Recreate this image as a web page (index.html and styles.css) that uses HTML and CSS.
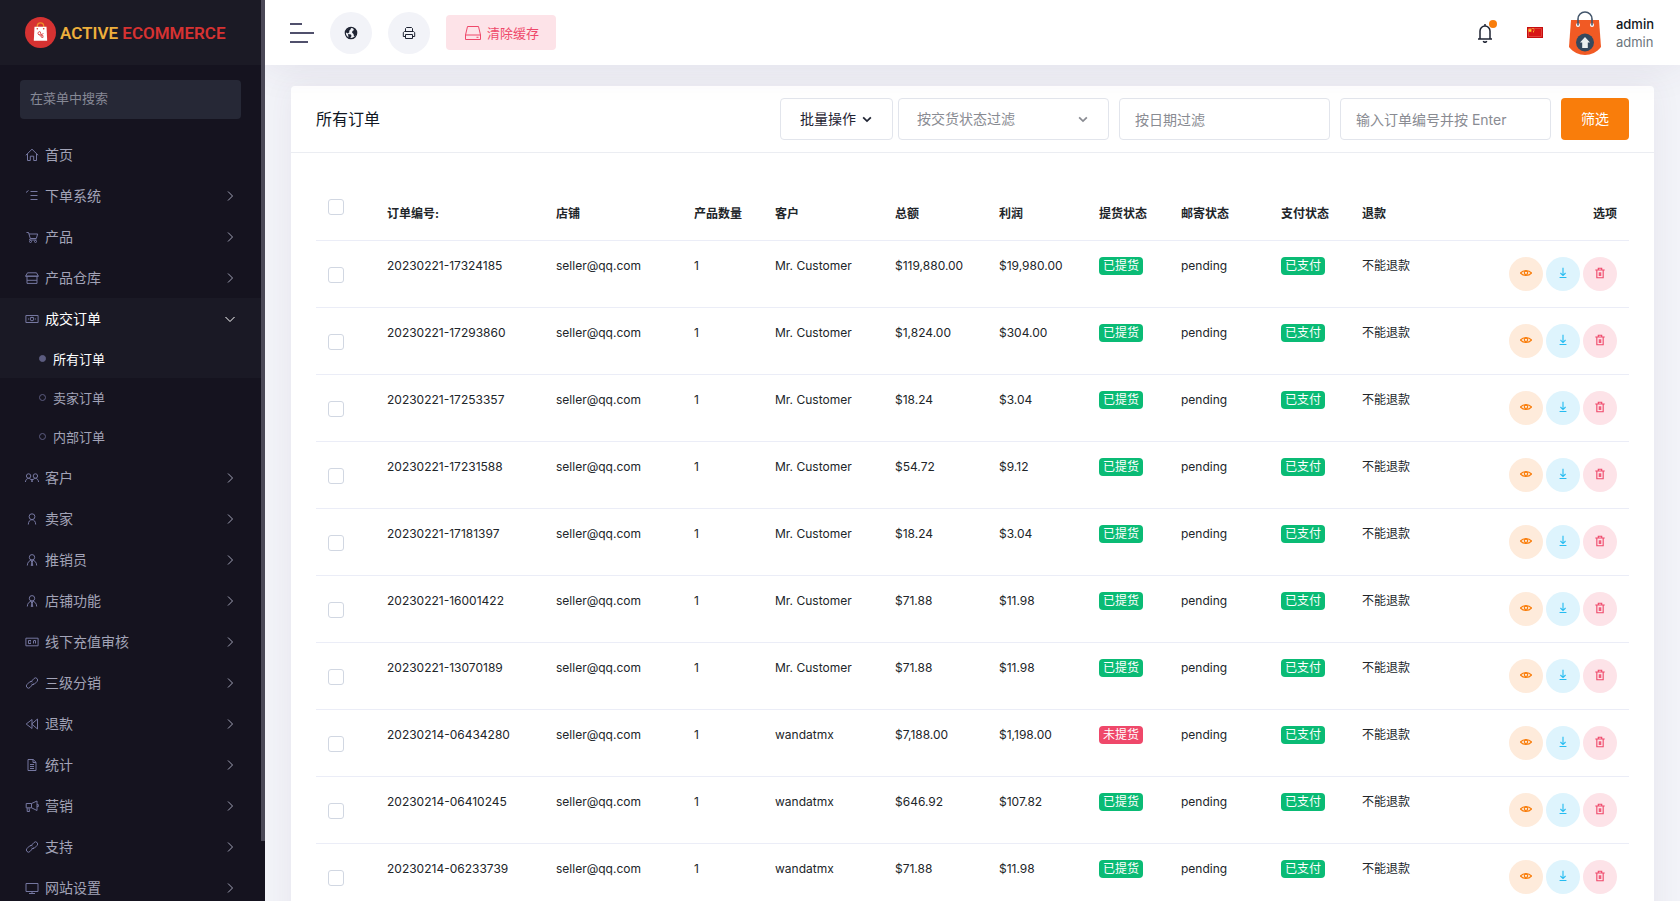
FILE: index.html
```html
<!DOCTYPE html>
<html lang="zh-CN">
<head>
<meta charset="utf-8">
<meta name="viewport" content="width=device-width, initial-scale=1">
<title>所有订单 | Active Ecommerce</title>
<link rel="stylesheet" href="styles.css">
</head>
<body>
<svg class="sprite" aria-hidden="true">
  <symbol id="i-home" viewBox="0 0 14 14"><path d="M.8 7.3 7 1.2l6.2 6.1M2.5 6v6.5h2.8V8.2h3.4v4.3h2.8V6"/></symbol>
  <symbol id="i-tasks" viewBox="0 0 14 14"><path d="m1 3.500 2.500-2M5.500 2.500h7M5.500 6.500h7M5.500 10.500h7"/></symbol>
  <symbol id="i-cart" viewBox="0 0 14 14"><path d="M1.5 2.5h2l1.8 6h6l1.4-4.5H4M5.3 8.5 4.5 10h7"/><circle cx="5.5" cy="11.5" r="1"/><circle cx="10.5" cy="11.5" r="1"/></symbol>
  <symbol id="i-store" viewBox="0 0 14 14"><path d="M2.5 1.8h9l1.9 3.4H.6zM2 5.2v7.2h10V5.2M2 9.3h10M.6 5.2h12.8"/></symbol>
  <symbol id="i-money" viewBox="0 0 14 14"><path d="M.9 3.5h12.2v7H.9z"/><circle cx="7" cy="7" r="1.8"/><path d="M3 7h1M10 7h1M5.5 5.5h3"/></symbol>
  <symbol id="i-users" viewBox="0 0 14 14"><circle cx="3.6" cy="5" r="2.2"/><circle cx="10.4" cy="5" r="2.2"/><path d="M.4 11c.3-2.4 1.6-3.6 3.2-3.6S6.700 8.600 7 11c.3-2.400 1.800-3.600 3.400-3.600s2.900 1.200 3.200 3.600M5.800 8.500h2.400"/></symbol>
  <symbol id="i-user" viewBox="0 0 14 14"><circle cx="7" cy="4.7" r="2.900"/><path d="M3.300 12.500c.1-3 1.600-4.800 3.700-4.800s3.600 1.800 3.700 4.800"/></symbol>
  <symbol id="i-tie" viewBox="0 0 14 14"><circle cx="7" cy="4.300" r="2.700"/><path d="M2.300 12.500c.1-3.400 2.200-5.300 4.700-5.300s4.600 1.900 4.700 5.300M5.500 7.500 7 9l1.500-1.500M7 9l-.8 3.500h1.600z"/></symbol>
  <symbol id="i-card" viewBox="0 0 14 14"><path d="M.9 3.200h12.200v7.600H.9zM6 5.500H3.500v3H6M5 7h1M9 5.500h1.500v3"/><path d="M8.500 5.500v3"/></symbol>
  <symbol id="i-link" viewBox="0 0 14 14"><path d="M5.500 6.300 9 2.500a2.100 2.100 0 0 1 3 3L9.500 8a2.100 2.100 0 0 1-3 0M8.500 7.500 5 11.500a2.100 2.100 0 0 1-3-3L4.500 6a2.100 2.100 0 0 1 3 0"/></symbol>
  <symbol id="i-back" viewBox="0 0 14 14"><path d="M7 2.500v9L1.200 7zM12.500 2v10L6.700 7z"/></symbol>
  <symbol id="i-file" viewBox="0 0 14 14"><path d="M3 1.500h5.200L11 4.200v8.300H3zM8 1.500v3h3M5 6.500h4M5 8.500h4M5 10.500h4"/></symbol>
  <symbol id="i-horn" viewBox="0 0 14 14"><path d="M1.200 4.500h5.300L12 2v9.500L6.500 8.800H1.200zM6.500 4.500v4.300M2.200 9v3.500H4.500L4 9M12 5.600h1.300v2H12"/></symbol>
  <symbol id="i-screen" viewBox="0 0 14 14"><path d="M1 2.500h12v8H1zM4 12.500h6M7 10.500v2"/></symbol>
  <symbol id="i-right" viewBox="0 0 14 14"><path d="m5 2.500 4.500 4.500L5 11.500"/></symbol>
  <symbol id="i-down" viewBox="0 0 14 14"><path d="M2.500 5 7 9.500 11.500 5"/></symbol>
  <symbol id="i-printer" viewBox="0 0 14 14"><path d="M3.500 5.500V2.500l1-1h5l1 1v3M3.500 10.500H1.300v-4l1.200-1h9l1.200 1v4h-2.200M3.500 8.500h7v4h-7zM4 5.500h6"/></symbol>
  <symbol id="i-disk" viewBox="0 0 18 16"><path d="M3.500 1.500h11l2 8.500v4.500h-15V10zM1.500 10h15M12.500 12.300h2"/></symbol>
  <symbol id="i-bell" viewBox="0 0 16 20"><path d="M8 1v1.700M3 15.500V8a5 5 0 0 1 10 0v7.500M1 16h14M6.300 18c.3.900.9 1.300 1.700 1.300s1.400-.4 1.700-1.300"/></symbol>
  <symbol id="i-eye" viewBox="0 0 14 14"><path d="M.5 7C3.900 3.300 10.100 3.300 13.500 7 10.100 10.700 3.900 10.700.5 7z"/><circle cx="7" cy="6.800" r="2"/></symbol>
  <symbol id="i-save" viewBox="0 0 14 14"><path d="M7 1v8.500M4 7l3 3 3-3M3 12.300h8"/></symbol>
  <symbol id="i-trash" viewBox="0 0 14 14"><path d="M1.500 3.500h11M5 3.300V1.500h4v1.800M3.300 3.500v9h7.400v-9M6.200 6v4.500M7.800 6v4.500"/></symbol>
</svg>

<div class="app">
  <aside class="sidebar">
    <a class="brand" href="#">
      <svg class="brand-mark" viewBox="0 0 31 31" aria-hidden="true">
        <circle cx="15.500" cy="15.500" r="15.500" fill="#d63232"/>
        <path d="M12.300 11V9a3.200 3.200 0 0 1 6.400 0v2" fill="none" stroke="#f0912a" stroke-width="1.300"/>
        <path d="M9.500 9.800h12l.7 14h-13.400z" fill="#fff"/>
        <circle cx="12.300" cy="11.800" r=".8" fill="#d63232"/><circle cx="18.700" cy="11.800" r=".8" fill="#d63232"/>
        <path d="M13 15.500l2-1 1 2-2 1.500-1-1zM16 18l2 .5v2l-2-.5zM14.500 18.500l4-2" fill="none" stroke="#d63232" stroke-width=".8"/>
      </svg>
      <span class="brand-name"><span class="brand-first">ACTIVE</span> ECOMMERCE</span>
    </a>
    <input class="menu-search" type="search" placeholder="在菜单中搜索" aria-label="在菜单中搜索">
    <nav class="menu">
      <a class="item" href="#"><svg><use href="#i-home"/></svg><span>首页</span></a>
      <a class="item" href="#"><svg><use href="#i-tasks"/></svg><span>下单系统</span><svg class="arrow"><use href="#i-right"/></svg></a>
      <a class="item" href="#"><svg><use href="#i-cart"/></svg><span>产品</span><svg class="arrow"><use href="#i-right"/></svg></a>
      <a class="item" href="#"><svg><use href="#i-store"/></svg><span>产品仓库</span><svg class="arrow"><use href="#i-right"/></svg></a>
      <a class="item open" href="#"><svg><use href="#i-money"/></svg><span>成交订单</span><svg class="arrow"><use href="#i-down"/></svg></a>
      <div class="submenu">
        <a class="sub current" href="#">所有订单</a>
        <a class="sub" href="#">卖家订单</a>
        <a class="sub" href="#">内部订单</a>
      </div>
      <a class="item" href="#"><svg><use href="#i-users"/></svg><span>客户</span><svg class="arrow"><use href="#i-right"/></svg></a>
      <a class="item" href="#"><svg><use href="#i-user"/></svg><span>卖家</span><svg class="arrow"><use href="#i-right"/></svg></a>
      <a class="item" href="#"><svg><use href="#i-tie"/></svg><span>推销员</span><svg class="arrow"><use href="#i-right"/></svg></a>
      <a class="item" href="#"><svg><use href="#i-tie"/></svg><span>店铺功能</span><svg class="arrow"><use href="#i-right"/></svg></a>
      <a class="item" href="#"><svg><use href="#i-card"/></svg><span>线下充值审核</span><svg class="arrow"><use href="#i-right"/></svg></a>
      <a class="item" href="#"><svg><use href="#i-link"/></svg><span>三级分销</span><svg class="arrow"><use href="#i-right"/></svg></a>
      <a class="item" href="#"><svg><use href="#i-back"/></svg><span>退款</span><svg class="arrow"><use href="#i-right"/></svg></a>
      <a class="item" href="#"><svg><use href="#i-file"/></svg><span>统计</span><svg class="arrow"><use href="#i-right"/></svg></a>
      <a class="item" href="#"><svg><use href="#i-horn"/></svg><span>营销</span><svg class="arrow"><use href="#i-right"/></svg></a>
      <a class="item" href="#"><svg><use href="#i-link"/></svg><span>支持</span><svg class="arrow"><use href="#i-right"/></svg></a>
      <a class="item" href="#"><svg><use href="#i-screen"/></svg><span>网站设置</span><svg class="arrow"><use href="#i-right"/></svg></a>
    </nav>
    <div class="scroll-thumb"></div>
  </aside>

  <div class="page">
    <header class="topbar">
      <button class="burger" type="button" aria-label="切换菜单"><span></span><span></span><span></span></button>
      <a class="round" href="#" aria-label="浏览网站">
        <svg class="globe" viewBox="0 0 14 14"><circle cx="7" cy="7" r="5.700" fill="none" stroke="#1f2433" stroke-width="1.200"/><path d="M2 4.500 5 1.500l2 .5-.5 1.500L5 5l.5 1L4 7.500 2 6.500zM4 8l3 .5.500 1.500L6 12.500l-1.500-1zM8.500 1.800l3 1.500 1.300 3.200-1 3-1.800 1L9.500 8 8 6.500l.5-1.500L10 4z" fill="#1f2433"/></svg>
      </a>
      <a class="round" href="#" aria-label="打印"><svg><use href="#i-printer"/></svg></a>
      <button class="clear-cache" type="button"><svg><use href="#i-disk"/></svg>清除缓存</button>
      <div class="top-right">
        <button class="bell" type="button" aria-label="通知"><svg><use href="#i-bell"/></svg><span class="dot"></span></button>
        <button class="flag" type="button" aria-label="语言">
          <svg viewBox="0 0 16 11"><path d="M0 0h16v11H0z" fill="#c60d0d"/><path d="M1.500 1.500h13v8h-13z" fill="#d81414" stroke="#e0403a"/><path d="M3 1.200l.7 1.400 1.500.1-1.100 1.100.4 1.500L3 4.600l-1.500.7.4-1.500L.8 2.700l1.500-.1zM5.500 1h1v1h-1zM6.500 2.500h1v1h-1zM6 4.300h1v1H6z" fill="#ffd92e"/></svg>
        </button>
        <a class="account" href="#">
          <svg class="avatar" viewBox="0 0 32 44" aria-hidden="true">
            <path d="M2 9h28l2 27c-8 10.500-24 10.500-32 0z" fill="#f15a24"/>
            <circle cx="9" cy="14" r="2" fill="#fff"/><circle cx="23" cy="14" r="2" fill="#fff"/>
            <path d="M9 14.500V8a7 7 0 0 1 14 0v6.500" fill="none" stroke="#43566b" stroke-width="1.600"/>
            <circle cx="16" cy="31.500" r="9" fill="#34495e"/>
            <path d="m16 26 5 5.500h-2.200V37h-5.600v-5.500H11z" fill="#ecf0f1"/>
          </svg>
          <span class="who"><strong>admin</strong><small>admin</small></span>
        </a>
      </div>
    </header>

    <main class="content">
      <section class="card">
        <form class="card-head">
          <h1>所有订单</h1>
          <button class="bulk" type="button">批量操作<svg><use href="#i-down"/></svg></button>
          <div class="field pick">
            <select class="control" aria-label="按交货状态过滤"><option>按交货状态过滤</option></select>
            <svg><use href="#i-down"/></svg>
          </div>
          <div class="field"><input class="control" type="text" placeholder="按日期过滤" aria-label="按日期过滤"></div>
          <div class="field"><input class="control" type="text" placeholder="输入订单编号并按 Enter" aria-label="输入订单编号并按 Enter"></div>
          <button class="filter" type="button">筛选</button>
        </form>
        <div class="card-body">
          <table>
            <colgroup><col class="c-check"><col class="c-code"><col class="c-shop"><col class="c-count"><col class="c-client"><col class="c-total"><col class="c-profit"><col class="c-delivery"><col class="c-mail"><col class="c-pay"><col class="c-refund"><col></colgroup>
            <thead>
              <tr><th><input type="checkbox" aria-label="全选"></th><th>订单编号:</th><th>店铺</th><th>产品数量</th><th>客户</th><th>总额</th><th>利润</th><th>提货状态</th><th>邮寄状态</th><th>支付状态</th><th>退款</th><th class="option-head">选项</th></tr>
            </thead>
            <tbody id="orders"></tbody>
          </table>
        </div>
      </section>
    </main>
  </div>
</div>
<script src="app.js"></script>
</body>
</html>
```

FILE: styles.css
```css
* { box-sizing: border-box; }
body {
  margin: 0;
  font-family: Inter, "Noto Sans CJK SC", sans-serif;
  font-size: 12px;
  line-height: 18px;
  color: #212529;
  background: #f2f3f8;
}
a { color: inherit; text-decoration: none; }
button, input, select { font: inherit; color: inherit; }
button { border: 0; padding: 0; background: none; cursor: pointer; }
svg { fill: none; stroke: currentColor; stroke-width: 1; flex: none; width: 14px; height: 14px; }
.sprite { position: absolute; width: 0; height: 0; }

.app { display: flex; height: 100vh; overflow: hidden; }

/* Sidebar */
.sidebar { position: relative; flex: none; width: 265px; background: #15131f; color: #a2a3b7; overflow: hidden; z-index: 2; }
.brand { display: flex; align-items: center; gap: 4px; height: 65px; padding-left: 25px; background: #1b1a25; }
.brand-mark { width: 31px; height: 31px; stroke: none; }
.brand-name { font-family: Roboto, sans-serif; font-size: 17px; font-weight: 600; color: #d63232; white-space: nowrap; }
.brand-first { color: #eeaf3c; }
.menu-search {
  display: block; width: 221px; height: 39px; margin: 15px 20px; padding: 0 10px 4px;
  border: 0; border-radius: 4px; background: #262836; font-size: 13px; outline: 0;
}
.menu-search::placeholder { color: #868996; opacity: 1; }
.item { display: flex; align-items: center; gap: 6px; height: 41px; padding: 0 28px 0 25px; font-size: 14px; }
.item svg { color: #7577a0; }
.item .arrow { margin-left: auto; color: #a2a3b7; }
.open, .current { background: #1a1925; color: #fff; }
.item.open .arrow { color: #fff; }
.submenu { padding-bottom: 1px; }
.sub { display: flex; align-items: center; gap: 7px; height: 39px; padding-left: 39px; font-size: 13px; }
.sub::before { content: ""; box-sizing: border-box; width: 7px; height: 7px; border: 1px solid #5c5c80; border-radius: 50%; }
.current::before { background: #5c5c80; }
.scroll-thumb { position: absolute; top: 0; right: 0; width: 4px; height: 841px; background: #4b4957; }

/* Top bar */
.page { flex: 1; min-width: 0; display: flex; flex-direction: column; }
.topbar {
  position: relative; z-index: 1; flex: none; display: flex; align-items: center;
  height: 65px; padding: 0 26px 0 25px; background: #fff; box-shadow: 0 0 40px rgba(82, 63, 105, .1);
}
.burger { display: flex; flex-direction: column; gap: 7px; width: 24px; margin-right: 16px; }
.burger span { width: 24px; height: 2px; background: #50506c; }
.burger span:first-child { width: 12px; }
.burger span:last-child { width: 18px; }
.round { display: grid; place-items: center; width: 42px; height: 42px; margin-right: 16px; border-radius: 50%; background: #f2f3f8; color: #1f2433; }
.round .globe { stroke: none; }
.clear-cache { display: flex; align-items: center; gap: 5px; height: 35px; padding: 0 17px 0 18px; border-radius: 4px; background: #fde3e8; color: #ef486a; font-size: 13px; }
.clear-cache svg { width: 18px; height: 16px; }
.top-right { display: flex; align-items: center; margin-left: auto; }
.bell { position: relative; width: 16px; height: 20px; color: #1f2433; }
.bell svg { display: block; width: 16px; height: 20px; stroke-width: 1.5; }
.dot { position: absolute; top: -3px; right: -4px; width: 8px; height: 8px; border-radius: 50%; background: #f97d0b; }
.flag { margin: 0 26px 0 34px; }
.flag svg { display: block; width: 16px; height: 11px; stroke: none; }
.account { display: flex; align-items: center; gap: 15px; }
.avatar { width: 32px; height: 44px; stroke: none; }
.who strong, .who small { display: block; font-size: 13px; font-weight: 400; color: #6c757d; }
.who strong { font-weight: 500; color: #111723; }

/* Orders card */
.content { flex: 1; min-height: 0; padding: 21px 26px; overflow-y: auto; scrollbar-width: none; }
.card { border-radius: 4px; background: #fff; box-shadow: 0 0 30px rgba(82, 63, 105, .07); }
.card-head { display: flex; align-items: center; gap: 10px; min-height: 67px; padding: 0 25px; border-bottom: 1px solid #ebedf2; }
.card-head h1 { flex: 1; margin: 0; font-size: 16px; font-weight: 400; color: #111723; }
.bulk { display: flex; align-items: center; justify-content: center; gap: 5px; width: 113px; height: 42px; margin-right: -5px; border: 1px solid #e2e5ec; border-radius: 4px; font-size: 14px; color: #1f2433; }
.bulk svg { width: 12px; height: 12px; stroke-width: 2; }
.field { position: relative; flex: 0 1 211px; }
.control { display: block; width: 100%; height: 42px; padding: 0 15px; border: 1px solid #e2e5ec; border-radius: 4px; background: #fff; color: #898b92; font-size: 14px; outline: 0; appearance: none; }
.pick .control { padding-left: 18px; }
.control::placeholder { color: #898b92; opacity: 1; }
.pick svg { position: absolute; right: 20px; top: 15px; width: 12px; height: 12px; color: #898b92; stroke-width: 2; pointer-events: none; }
.filter { width: 68px; height: 42px; border-radius: 4px; background: #f97d0b; color: #fff; font-size: 14px; }

.card-body { padding: 25px; }
table { width: 100%; table-layout: fixed; border-collapse: separate; border-spacing: 0; }
.c-check { width: 59px; }
.c-code { width: 169px; }
.c-shop { width: 138px; }
.c-count { width: 81px; }
.c-client { width: 120px; }
.c-total { width: 104px; }
.c-profit { width: 100px; }
.c-delivery { width: 82px; }
.c-mail { width: 100px; }
.c-pay { width: 81px; }
.c-refund { width: 96px; }
th, td { padding: 16px 12px; border-bottom: 1px solid #ebedf7; text-align: left; vertical-align: top; white-space: nowrap; }
th { height: 63px; padding: 0 12px 17px; vertical-align: bottom; font-weight: 700; }
th:first-child { padding-top: 21px; vertical-align: top; }
.option-head { text-align: right; }
td:first-child { padding: 26px 12px 0; }
.options { display: flex; justify-content: flex-end; gap: 3px; }
table input { display: block; width: 16px; height: 16px; margin: 0; border: 1px solid #d1d7e2; border-radius: 3px; background: #fff; appearance: none; }
table input:checked { background: #f97d0b; }
.badge { display: inline-block; padding: 0 4px; border-radius: 4px; background: #0abb75; color: #fff; vertical-align: top; }
.badge.late { background: #ef486a; }
.act { display: grid; place-items: center; width: 34px; height: 34px; padding-bottom: 2px; border-radius: 50%; }
.act svg { width: 12px; height: 12px; stroke-width: 1.3; }
.view { background: #feebdb; color: #f97d0b; }
.load { background: #def4fd; color: #25bcf1; }
.drop { background: #fde3e8; color: #ef486a; }
```

FILE: app.js
```js
const orders = [
  ["20230221-17324185", "Mr. Customer", "$119,880.00", "$19,980.00"],
  ["20230221-17293860", "Mr. Customer", "$1,824.00", "$304.00"],
  ["20230221-17253357", "Mr. Customer", "$18.24", "$3.04"],
  ["20230221-17231588", "Mr. Customer", "$54.72", "$9.12"],
  ["20230221-17181397", "Mr. Customer", "$18.24", "$3.04"],
  ["20230221-16001422", "Mr. Customer", "$71.88", "$11.98"],
  ["20230221-13070189", "Mr. Customer", "$71.88", "$11.98"],
  ["20230214-06434280", "wandatmx", "$7,188.00", "$1,198.00", true],
  ["20230214-06410245", "wandatmx", "$646.92", "$107.82"],
  ["20230214-06233739", "wandatmx", "$71.88", "$11.98"]
];

document.getElementById("orders").innerHTML = orders.map(([code, client, total, profit, late]) => `
  <tr>
    <td><input type="checkbox" aria-label="选择 ${code}"></td>
    <td>${code}</td><td>seller@qq.com</td><td>1</td><td>${client}</td><td>${total}</td><td>${profit}</td>
    <td><span class="badge${late ? " late" : ""}">${late ? "未提货" : "已提货"}</span></td>
    <td>pending</td><td><span class="badge">已支付</span></td><td>不能退款</td>
    <td><div class="options">
      <a class="act view" href="#" aria-label="查看"><svg><use href="#i-eye"/></svg></a>
      <a class="act load" href="#" aria-label="下载"><svg><use href="#i-save"/></svg></a>
      <a class="act drop" href="#" aria-label="删除"><svg><use href="#i-trash"/></svg></a>
    </div></td>
  </tr>`).join("");
```
